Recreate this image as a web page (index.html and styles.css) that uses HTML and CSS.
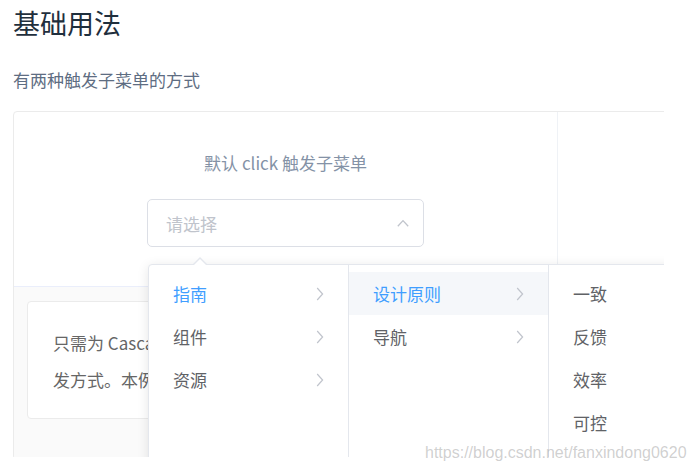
FILE: index.html
```html
<!DOCTYPE html>
<html lang="zh-CN">
<head>
<meta charset="utf-8">
<title>Cascader 级联选择器 - 基础用法</title>
<link rel="stylesheet" href="styles.css">
</head>
<body>
<div class="viewport">
  <h3 class="title">基础用法</h3>
  <p class="subtitle">有两种触发子菜单的方式</p>
  <div class="demo-card">
    <div class="source">
      <div class="block">
        <span class="demonstration">默认 click 触发子菜单</span>
        <div class="cascader">
          <div class="input">
            <span class="placeholder">请选择</span>
            <svg class="suffix" width="12" height="8" viewBox="0 0 12 8"><path d="M0.8 7.2 L6 1.6 L11.2 7.2" fill="none" stroke="#c0c4cc" stroke-width="1.3"/></svg>
          </div>
          <div class="dropdown">
            <span class="popper-arrow"></span>
            <div class="menu">
              <ul class="menu-list">
                <li class="item active"><span>指南</span><svg class="chev" width="8" height="14" viewBox="0 0 8 14"><path d="M1.2 1 L6.6 7 L1.2 13" fill="none" stroke="#c0c4cc" stroke-width="1.2"/></svg></li>
                <li class="item"><span>组件</span><svg class="chev" width="8" height="14" viewBox="0 0 8 14"><path d="M1.2 1 L6.6 7 L1.2 13" fill="none" stroke="#c0c4cc" stroke-width="1.2"/></svg></li>
                <li class="item"><span>资源</span><svg class="chev" width="8" height="14" viewBox="0 0 8 14"><path d="M1.2 1 L6.6 7 L1.2 13" fill="none" stroke="#c0c4cc" stroke-width="1.2"/></svg></li>
              </ul>
            </div>
            <div class="menu">
              <ul class="menu-list">
                <li class="item active hover"><span>设计原则</span><svg class="chev" width="8" height="14" viewBox="0 0 8 14"><path d="M1.2 1 L6.6 7 L1.2 13" fill="none" stroke="#c0c4cc" stroke-width="1.2"/></svg></li>
                <li class="item"><span>导航</span><svg class="chev" width="8" height="14" viewBox="0 0 8 14"><path d="M1.2 1 L6.6 7 L1.2 13" fill="none" stroke="#c0c4cc" stroke-width="1.2"/></svg></li>
              </ul>
            </div>
            <div class="menu">
              <ul class="menu-list">
                <li class="item"><span>一致</span></li>
                <li class="item"><span>反馈</span></li>
                <li class="item"><span>效率</span></li>
                <li class="item"><span>可控</span></li>
              </ul>
            </div>
          </div>
        </div>
      </div>
      <div class="block block-empty"></div>
    </div>
    <div class="meta">
      <div class="description">
        <span class="line">只需为 Cascader 的options属性指定选项数组即可渲染出一个级联选择器。通过props.expandTrigger可以定义展开子级菜单的触</span>
        <span class="line">发方式。本例还展示了 click 与 hover 两种方式。</span>
      </div>
    </div>
  </div>
</div>
<div class="watermark">https://blog.csdn.net/fanxindong0620</div>
</body>
</html>
```
FILE: styles.css
```css
* { box-sizing: border-box; }

html, body { margin: 0; padding: 0; background: #fff; }

body {
  position: relative;
  width: 693px;
  height: 472px;
  font-family: "Noto Sans CJK SC", sans-serif;
}

.viewport {
  width: 664px;
  height: 457px;
  overflow: hidden;
  padding-left: 13px;
}

.title {
  margin: 0;
  padding-top: 3px;
  font-size: 27px;
  line-height: 40px;
  font-weight: 400;
  color: #1f2f3d;
}

.subtitle {
  margin: 25px 0 0;
  font-size: 17px;
  line-height: 24px;
  color: #5e6d82;
}

.demo-card {
  margin-top: 19px;
  width: 1090px;
  border: 1px solid #ebebeb;
  border-radius: 4px;
}

.source { display: flex; }

.block {
  flex: none;
  width: 544px;
  padding: 39px 0;
  text-align: center;
  border-right: 1px solid #eff2f6;
}

.block-empty { border-right: none; }

.demonstration {
  display: block;
  font-size: 17px;
  line-height: 24px;
  color: #8492a6;
  margin-bottom: 24px;
}

.cascader {
  display: inline-block;
  position: relative;
  width: 277px;
  vertical-align: top;
  text-align: left;
}

.input {
  height: 48px;
  border: 1px solid #dcdfe6;
  border-radius: 5px;
  background: #fff;
  display: flex;
  align-items: center;
  justify-content: space-between;
  padding: 0 14px 0 18px;
}

.placeholder {
  font-size: 17px;
  color: #c0c4cc;
}

.suffix { display: block; }

.dropdown {
  position: absolute;
  left: 1px;
  top: calc(100% + 17px);
  z-index: 10;
  display: flex;
  background: #fff;
  border: 1px solid #e4e7ed;
  border-radius: 4px;
  box-shadow: 0 2px 12px 0 rgba(0, 0, 0, 0.1);
}

.popper-arrow {
  position: absolute;
  left: 44px;
  top: -8px;
  width: 0;
  height: 0;
  border-left: 7px solid transparent;
  border-right: 7px solid transparent;
  border-bottom: 7px solid #e4e7ed;
}

.popper-arrow::after {
  content: "";
  position: absolute;
  left: -6px;
  top: 1.5px;
  width: 0;
  height: 0;
  border-left: 6px solid transparent;
  border-right: 6px solid transparent;
  border-bottom: 6px solid #fff;
}

.menu {
  flex: none;
  width: 200px;
  height: 245px;
  border-right: 1px solid #e4e7ed;
}

.menu:last-child { border-right: none; }

.menu-list {
  list-style: none;
  margin: 0;
  padding: 7px 0;
}

.item {
  height: 43px;
  padding: 0 24px;
  display: flex;
  align-items: center;
  justify-content: space-between;
  font-size: 17px;
  color: #606266;
}

.item.active { color: #409eff; }
.item.hover { background: #f5f7fa; }

.chev { display: block; }

.meta {
  background: #fafafa;
  border-top: 1px solid #eaeefb;
  padding: 14px 13px 40px;
}

.description {
  background: #fff;
  border: 1px solid #ebebeb;
  border-radius: 4px;
  padding: 22px 25px 20px;
  font-size: 17px;
  line-height: 37px;
  color: #666;
}

.line {
  display: block;
  white-space: nowrap;
}

.watermark {
  position: absolute;
  z-index: 20;
  left: 425px;
  top: 445px;
  font-family: "Liberation Sans", Arial, sans-serif;
  font-size: 16px;
  line-height: 16px;
  color: rgba(150, 150, 150, 0.45);
  white-space: nowrap;
}
```
